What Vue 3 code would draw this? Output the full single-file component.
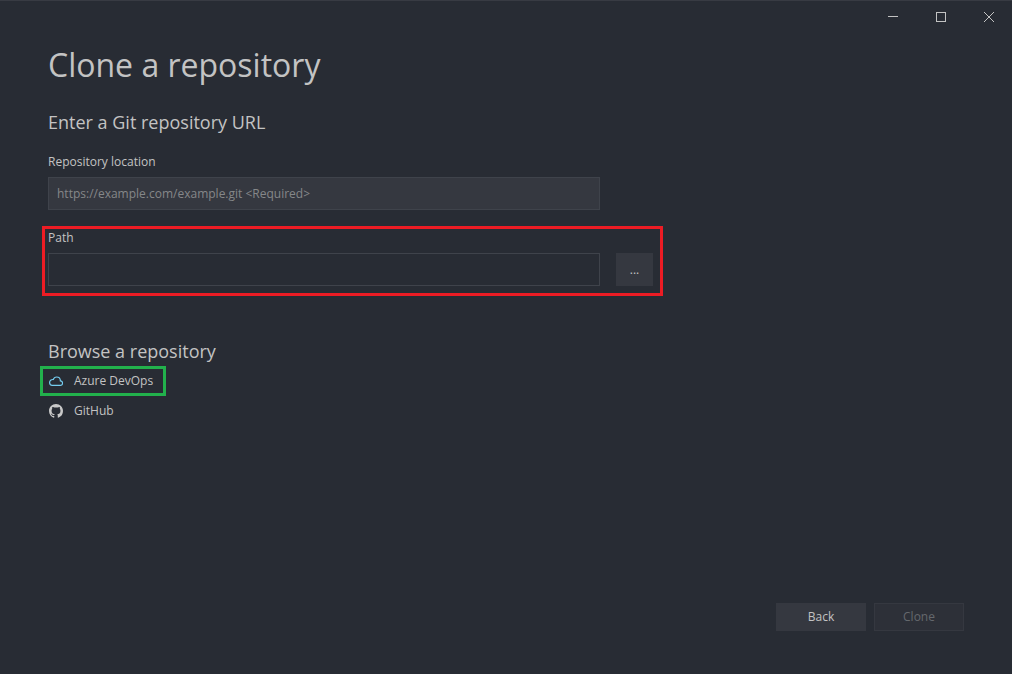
<script setup>
import { ref } from 'vue'

const location = ref('')
const path = ref('')
</script>

<template>
  <div class="window">
    <header class="titlebar">
      <button type="button" class="caption" aria-label="Minimize">
        <svg viewBox="0 0 10 10" shape-rendering="crispEdges"><path d="M0 4.5H10" /></svg>
      </button>
      <button type="button" class="caption" aria-label="Maximize">
        <svg viewBox="0 0 10 10" shape-rendering="crispEdges"><path d="M.5 .5H9.5V9.5H.5Z" /></svg>
      </button>
      <button type="button" class="caption" aria-label="Close">
        <svg viewBox="0 0 10 10"><path d="M0 0L10 10M10 0L0 10" /></svg>
      </button>
    </header>

    <main class="content">
      <h1>Clone a repository</h1>

      <h2>Enter a Git repository URL</h2>
      <div class="field">
        <label for="location">Repository location</label>
        <div class="row">
          <input
            id="location"
            v-model="location"
            class="filled"
            type="text"
            placeholder="https://example.com/example.git &lt;Required&gt;"
          />
        </div>
      </div>
      <div class="field path">
        <label for="path">Path</label>
        <div class="row">
          <input id="path" v-model="path" type="text" />
          <button type="button" class="browse" aria-label="Browse for a path">...</button>
        </div>
      </div>

      <h2 class="second">Browse a repository</h2>
      <ul class="providers">
        <li class="marked">
          <a href="#azure">
            <svg class="cloud" viewBox="0 0 14 14">
              <path d="M3.2 11.3H11.3A2.2 2.2 0 0 0 11.4 6.9C11.3 4.6 9.8 3 7.7 3C6 3 4.8 3.9 4.3 5.5C2.2 5.3.6 6.5.6 8.5C.6 10.1 1.7 11.3 3.2 11.3Z" />
            </svg>
            <span>Azure DevOps</span>
          </a>
        </li>
        <li>
          <a href="#github">
            <svg class="github" viewBox="0 0 16 16">
              <path d="M8 0C3.58 0 0 3.58 0 8c0 3.54 2.29 6.53 5.47 7.59.4.07.55-.17.55-.38 0-.19-.01-.82-.01-1.49-2.01.37-2.53-.49-2.69-.94-.09-.23-.48-.94-.82-1.13-.28-.15-.68-.52-.01-.53.63-.01 1.08.58 1.23.82.72 1.21 1.87.87 2.33.66.07-.52.28-.87.51-1.07-1.78-.2-3.64-.89-3.64-3.95 0-.87.31-1.59.82-2.15-.08-.2-.36-1.02.08-2.12 0 0 .67-.21 2.2.82.64-.18 1.32-.27 2-.27s1.36.09 2 .27c1.53-1.04 2.2-.82 2.2-.82.44 1.1.16 1.92.08 2.12.51.56.82 1.27.82 2.15 0 3.07-1.87 3.75-3.65 3.95.29.25.54.73.54 1.48 0 1.07-.01 1.93-.01 2.2 0 .21.15.46.55.38A8.01 8.01 0 0 0 16 8c0-4.42-3.58-8-8-8Z" />
            </svg>
            <span>GitHub</span>
          </a>
        </li>
      </ul>
    </main>

    <footer class="actions">
      <button type="button">Back</button>
      <button type="button" disabled>Clone</button>
    </footer>
  </div>
</template>

<style>
body {
  margin: 0;
  background: #282c34;
}
</style>

<style scoped>
.window {
  box-sizing: border-box;
  display: flex;
  flex-direction: column;
  min-height: 100vh;
  border-top: 1px solid #383b43;
  background: #282c34;
  color: #c3c3c3;
  font: 12px/16px "Open Sans", "Noto Sans", sans-serif;
}

button,
input {
  box-sizing: border-box;
  margin: 0;
  border: 1px solid #3f434b;
  border-radius: 0;
  color: inherit;
  font: inherit;
}

.titlebar {
  display: flex;
  justify-content: flex-end;
}

.caption {
  display: flex;
  align-items: center;
  justify-content: center;
  width: 48px;
  height: 32px;
  padding: 0 0 0 2px;
  border: 0;
  background: none;
}

.caption svg {
  width: 10px;
  height: 10px;
  fill: none;
  stroke: #c3c3c3;
}

.content {
  flex: 1;
  padding: 8px 48px 24px;
}

h1,
h2 {
  margin: 0;
  font-weight: 400;
}

h1 {
  margin-bottom: 19px;
  font-size: 32px;
  line-height: 48px;
}

h2 {
  margin-bottom: 18px;
  font-size: 18px;
  line-height: 28px;
}

h2.second {
  margin: 51px 0 1px;
}

.field {
  position: relative;
  max-width: 605px;
}

.field + .field {
  margin-top: 20px;
}

label {
  display: block;
  margin-bottom: 7px;
}

.row {
  display: flex;
  gap: 16px;
}

input {
  flex: 0 1 552px;
  min-width: 0;
  height: 33px;
  padding: 0 8px;
  background: transparent;
}

.filled {
  background: #353840;
}

input::placeholder {
  color: #858789;
  opacity: 1;
}

.browse {
  flex: none;
  width: 37px;
  height: 33px;
  padding: 0;
  border-color: #353840;
  background: #353840;
}

.path::after,
.marked::after {
  content: "";
  position: absolute;
  pointer-events: none;
}

.path::after {
  inset: -4px -10px -10px -6px;
  border: 3px solid #ed1c24;
}

.providers {
  display: flex;
  flex-direction: column;
  align-items: flex-start;
  margin: 0;
  padding: 0;
  list-style: none;
}

.providers li {
  position: relative;
}

.marked::after {
  inset: 0 -13px 0 -8px;
  border: 3px solid #22b14c;
}

.providers a {
  display: flex;
  align-items: center;
  gap: 11px;
  height: 30px;
  padding-left: 1px;
  color: inherit;
  text-decoration: none;
}

.providers svg {
  width: 14px;
  height: 14px;
}

.cloud {
  fill: none;
  stroke: #75cdf0;
  stroke-width: 1.2;
}

.github {
  fill: #c8c8c8;
}

.actions {
  display: flex;
  justify-content: flex-end;
  gap: 8px;
  padding: 0 48px 43px;
}

.actions button {
  width: 90px;
  height: 28px;
  padding: 0;
  border-color: #353840;
  background: #353840;
}

.actions button:disabled {
  background: #2d3038;
  color: #65686d;
}
</style>
